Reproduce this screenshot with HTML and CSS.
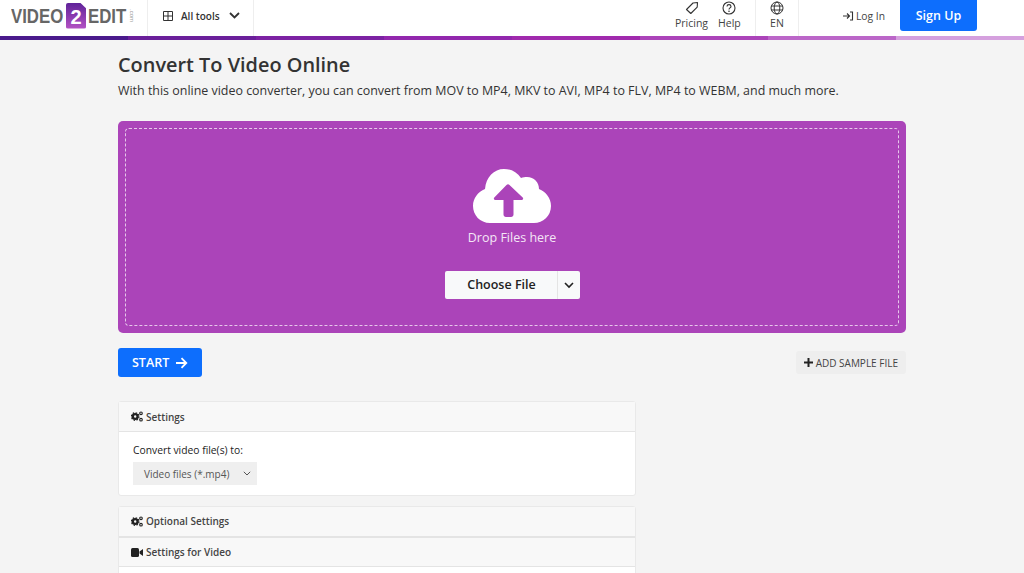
FILE: index.html
```html
<!DOCTYPE html>
<html lang="en">
<head>
    <meta charset="UTF-8">
    <title>Convert To Video Online</title>
    <link rel="stylesheet" href="styles.css">
</head>
<body>
    <header class="topbar">
        <a class="logo">
            <span class="logo-word logo-video">VIDEO</span>
            <span class="logo-two">2</span>
            <span class="logo-word logo-edit">EDIT</span>
            <span class="logo-com">.com</span>
        </a>
        <div class="all-tools">
            <svg class="ic-grid" width="10" height="10" viewBox="0 0 10 10"><path d="M.5.5h9v9h-9zM.5 5h9M5 .5v9" fill="none" stroke="#333" stroke-width="1"/></svg>
            <span>All tools</span>
            <svg class="ic-chev" width="11" height="7" viewBox="0 0 11 7"><path d="M1 1l4.500 4.500L10 1" fill="none" stroke="#333" stroke-width="1.800"/></svg>
        </div>
        <div class="spacer"></div>
        <div class="nav-group">
            <a class="nav-item">
                <svg width="14" height="14" viewBox="0 0 14 14"><path d="M1.500 8.500 8 2l4.500-.5-.3 4.700-6.400 6.300z" fill="none" stroke="#333" stroke-width="1.100" stroke-linejoin="round"/></svg>
                <span>Pricing</span>
            </a>
            <a class="nav-item">
                <svg width="14" height="14" viewBox="0 0 14 14"><circle cx="7" cy="7" r="6" fill="none" stroke="#333" stroke-width="1.100"/><path d="M5 5.400C5 4.200 6 3.600 7 3.600s2 .7 2 1.800c0 1.500-2 1.500-2 3" fill="none" stroke="#333" stroke-width="1.100"/><circle cx="7" cy="10.300" r=".8" fill="#333"/></svg>
                <span>Help</span>
            </a>
        </div>
        <a class="nav-item lang">
            <svg width="14" height="14" viewBox="0 0 14 14"><g fill="none" stroke="#333" stroke-width="1"><circle cx="7" cy="7" r="6"/><ellipse cx="7" cy="7" rx="2.800" ry="6"/><path d="M1.200 5h11.600M1.200 9h11.600"/></g></svg>
            <span>EN</span>
        </a>
        <a class="login">
            <svg width="11" height="10" viewBox="0 0 11 10"><path d="M0 5h6M4 2.500 6.500 5 4 7.500M7 1h2.500v8H7" fill="none" stroke="#333" stroke-width="1.100"/></svg>
            Log In
        </a>
        <a class="signup">Sign Up</a>
    </header>
    <div class="rainbow">
        <i class="s1"></i><i class="s2"></i><i class="s3"></i><i class="s4"></i><i class="s5"></i><i class="s6"></i><i class="s7"></i><i class="s8"></i>
    </div>

    <main class="page">
        <h1>Convert To Video Online</h1>
        <p class="lead">With this online video converter, you can convert from MOV to MP4, MKV to AVI, MP4 to FLV, MP4 to WEBM, and much more.</p>

        <section class="dropzone">
            <div class="dropzone-inner">
                <svg class="cloud" width="78" height="54" viewBox="0 0 78 54"><path d="M17 54C7 54 0 46 0 37c0-8 5-14 12-17C13 8 21 0 31 0c7 0 13 3 17 9 2-1 4-1 6-1 7 0 12 5 12 12 7 3 12 9 12 17 0 10-8 17-17 17z" fill="#fff"/><path d="M33 48c-1.500 0-2.500-1-2.500-2.500V31h-8c-1.500 0-2.200-1.600-1.200-2.600L33.500 16c1-1 2-1 3 0l13.200 12.400c1 1 .3 2.600-1.200 2.600h-8v14.500c0 1.500-1 2.500-2.500 2.500z" fill="#ab44b9"/></svg>
                <div class="drop-text">Drop Files here</div>
                <div class="choose">
                    <span class="choose-main">Choose File</span>
                    <span class="choose-arrow"><svg width="10" height="7" viewBox="0 0 10 7"><path d="M1 1l4 4 4-4" fill="none" stroke="#222" stroke-width="1.600"/></svg></span>
                </div>
            </div>
        </section>

        <div class="actions">
            <a class="start">START
                <svg width="13" height="12" viewBox="0 0 13 12"><path d="M1 6h10M6.500 1.200 11.300 6l-4.800 4.800" fill="none" stroke="#fff" stroke-width="1.800"/></svg>
            </a>
            <a class="sample">
                <svg width="9" height="9" viewBox="0 0 9 9"><path d="M4.500 0v9M0 4.500h9" stroke="#222" stroke-width="2"/></svg>
                ADD SAMPLE FILE
            </a>
        </div>

        <section class="card">
            <div class="card-head">
                <svg width="12" height="11" viewBox="0 0 12 11"><g fill="none" stroke="#222"><circle cx="4.200" cy="5.500" r="2.400" stroke-width="2.400"/><circle cx="4.200" cy="5.500" r="3.800" stroke-width="1.200" stroke-dasharray="1.500 1.480"/><circle cx="10" cy="2.300" r="1.300" stroke-width="1.100"/><circle cx="10" cy="8.700" r="1.300" stroke-width="1.100"/></g></svg>
                Settings
            </div>
            <div class="card-body">
                <label class="field-label">Convert video file(s) to:</label>
                <div class="select">
                    <span>Video files (*.mp4)</span>
                    <svg width="8" height="5" viewBox="0 0 8 5"><path d="M.8.800 4 4 7.200.8" fill="none" stroke="#555" stroke-width="1"/></svg>
                </div>
            </div>
        </section>

        <section class="card card-optional">
            <div class="card-head opt-head">
                <svg width="12" height="11" viewBox="0 0 12 11"><g fill="none" stroke="#222"><circle cx="4.200" cy="5.500" r="2.400" stroke-width="2.400"/><circle cx="4.200" cy="5.500" r="3.800" stroke-width="1.200" stroke-dasharray="1.500 1.480"/><circle cx="10" cy="2.300" r="1.300" stroke-width="1.100"/><circle cx="10" cy="8.700" r="1.300" stroke-width="1.100"/></g></svg>
                Optional Settings
            </div>
            <div class="card-head sub-head">
                <svg width="12" height="9" viewBox="0 0 12 9"><rect width="8" height="9" rx="1.500" fill="#222"/><path d="M8.500 3.500 12 1v7L8.500 5.500z" fill="#222"/></svg>
                Settings for Video
            </div>
        </section>
    </main>
</body>
</html>
```
FILE: styles.css
```css
*{
    box-sizing: border-box;
}
html, body{
    height: 573px;
    overflow: hidden;
}
body{
    margin: 0;
    background-color: #f4f4f4;
    font-family: "Open Sans", sans-serif;
    color: #212529;
}

/* top bar */
.topbar{
    display: flex;
    align-items: stretch;
    height: 36px;
    background-color: #fff;
}
.logo{
    display: flex;
    align-items: center;
    width: 148px;
    padding: 0 0 5px 11px;
    border-right: 1px solid #eee;
    font-family: "Liberation Sans", sans-serif;
}
.logo-word{
    display: inline-block;
    font-size: 21px;
    font-weight: bold;
    color: #666;
    transform-origin: left center;
    transform: scaleX(.8);
}
.logo-video{
    width: 55px;
}
.logo-edit{
    width: 41px;
    margin-left: 2px;
}
.logo-two{
    width: 20px;
    height: 26px;
    background: linear-gradient(#5f2399, #b552c4);
    clip-path: polygon(0 0, 70% 0, 100% 22%, 100% 100%, 0 100%);
    color: #fff;
    font-size: 20px;
    font-weight: bold;
    text-align: center;
    line-height: 28px;
    border-radius: 2px;
}
.logo-com{
    writing-mode: vertical-rl;
    font-size: 6px;
    color: #999;
}
.all-tools{
    display: flex;
    align-items: center;
    width: 106px;
    padding: 0 0 5px 15px;
    border-right: 1px solid #eee;
    font-size: 10px;
    font-weight: 600;
    color: #333;
}
.ic-grid{
    margin-right: 8px;
}
.ic-chev{
    margin-left: 9px;
}
.spacer{
    flex: 1;
}
.nav-group{
    display: flex;
    gap: 10px;
    width: 96px;
    padding-left: 15px;
    border-right: 1px solid #eee;
}
.nav-item{
    display: flex;
    flex-direction: column;
    align-items: center;
    padding-top: 1px;
    font-size: 10.5px;
    line-height: 14px;
    color: #444;
}
.nav-item svg{
    margin-bottom: 1px;
}
.lang{
    width: 43px;
    border-right: 1px solid #eee;
}
.login{
    display: flex;
    align-items: center;
    gap: 2px;
    margin-left: 44px;
    padding-bottom: 5px;
    font-size: 10.3px;
    color: #444;
}
.signup{
    width: 77px;
    height: 31px;
    margin-left: 15px;
    margin-right: 47px;
    background-color: #0d6efd;
    border-radius: 0 0 3px 3px;
    color: #fff;
    font-size: 12.5px;
    font-weight: 600;
    text-align: center;
    line-height: 31px;
}

.rainbow{
    display: flex;
    height: 4px;
}
.rainbow i{
    flex: 1;
}
.s1{ background-color: #4a1a8c; }
.s2{ background-color: #6a1f9a; }
.s3{ background-color: #7c22a3; }
.s4{ background-color: #9227ad; }
.s5{ background-color: #a02aad; }
.s6{ background-color: #ab44b9; }
.s7{ background-color: #bb66c8; }
.s8{ background-color: #d5a0de; }

/* main column */
.page{
    width: 788px;
    margin-left: 118px;
}
h1{
    margin: 11px 0 0;
    font-size: 19.9px;
    font-weight: 600;
    line-height: 28px;
    color: #333;
}
.lead{
    margin: 3px 0 0;
    font-size: 12.45px;
    line-height: 17px;
    color: #333;
}

.dropzone{
    height: 212px;
    margin-top: 22px;
    padding: 7px;
    background-color: #ab44b9;
    border-radius: 5px;
}
.dropzone-inner{
    display: flex;
    flex-direction: column;
    align-items: center;
    height: 198px;
    padding-top: 40px;
    border: 1px dashed #e6c8ea;
    border-radius: 4px;
}
.drop-text{
    margin-top: 6px;
    font-size: 12.5px;
    line-height: 18px;
    color: #f4e6f6;
}
.choose{
    display: flex;
    margin-top: 24px;
    height: 28px;
    background-color: #f8f9fa;
    border-radius: 2px;
    font-size: 12.5px;
    font-weight: 600;
    color: #222;
}
.choose-main{
    width: 112px;
    padding-left: 2px;
    text-align: center;
    line-height: 28px;
}
.choose-arrow{
    display: flex;
    align-items: center;
    justify-content: center;
    width: 23px;
    border-left: 1px solid #e4e4e4;
}

.actions{
    display: flex;
    justify-content: space-between;
    align-items: center;
    margin-top: 15px;
}
.start{
    display: flex;
    align-items: center;
    gap: 6px;
    width: 84px;
    height: 29px;
    padding-left: 14px;
    background-color: #0d6efd;
    border-radius: 3px;
    color: #fff;
    font-size: 12.5px;
    font-weight: 600;
}
.sample{
    display: flex;
    align-items: center;
    gap: 3px;
    height: 23px;
    padding: 0 8px;
    background-color: #eee;
    border-radius: 3px;
    font-size: 10px;
    color: #444;
}

.card{
    width: 518px;
    margin-top: 24px;
    background-color: #fff;
    border: 1px solid #e9e9e9;
    border-radius: 3px;
}
.card-head{
    display: flex;
    align-items: center;
    gap: 3px;
    height: 30px;
    padding-left: 12px;
    background-color: #f8f8f8;
    border-bottom: 1px solid #e4e4e4;
    font-size: 10px;
    font-weight: 600;
    color: #444;
}
.opt-head{
    padding-bottom: 1px;
}
.card-body{
    height: 63px;
    padding: 11px 14px;
}
.field-label{
    display: block;
    font-size: 10.3px;
    line-height: 14px;
    font-weight: 500;
    color: #222;
}
.select{
    display: flex;
    align-items: center;
    justify-content: space-between;
    width: 124px;
    height: 23px;
    margin-top: 5px;
    padding: 0 6px 0 11px;
    background-color: #efefef;
    font-size: 10px;
    color: #555;
}
.card-optional{
    height: 120px;
    margin-top: 10px;
}
.sub-head{
    border-top: 1px solid #e4e4e4;
}
```
